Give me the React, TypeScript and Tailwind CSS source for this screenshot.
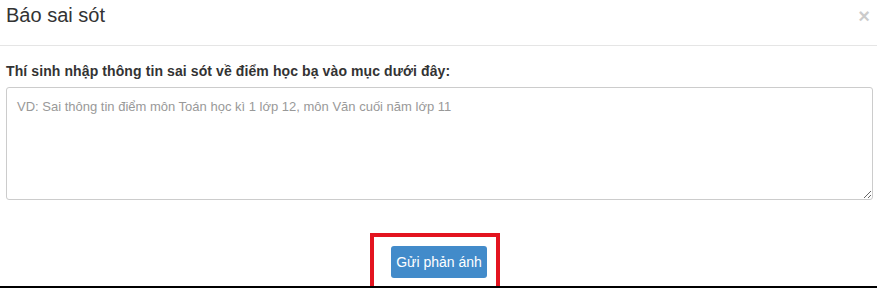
export default function App() {
  return (
    <div className="w-[877px] h-[288px] bg-white flex flex-col text-[#333] font-['Liberation_Sans',Arial,sans-serif] overflow-hidden">
      {/* header */}
      <div className="h-[46px] shrink-0 flex items-start justify-between pl-[6px] pr-[6px] pt-[4px] border-b border-[#e5e5e5]">
        <h4 className="text-[20px] leading-[22px]">Báo sai sót</h4>
        <button className="text-[20px] leading-[20px] font-bold text-black opacity-20 mr-[1px] mt-[2px]">×</button>
      </div>
      {/* body */}
      <div className="flex flex-col px-[6px] pt-[16px]">
        <label className="text-[14px] leading-[18px] font-bold tracking-[0.1px]">
          Thí sinh nhập thông tin sai sót về điểm học bạ vào mục dưới đây:
        </label>
        <textarea
          className="mt-[7px] h-[113px] w-[867px] border border-[#ccc] rounded-[3px] px-[10px] py-[10px] text-[13px] leading-[18px] placeholder:text-[#999] outline-none"
          placeholder="VD: Sai thông tin điểm môn Toán học kì 1 lớp 12, môn Văn cuối năm lớp 11"
        />
      </div>
      {/* footer */}
      <div className="flex-1 flex flex-col justify-end items-center">
        <div className="border-[4px] border-b-0 border-[#e3141f] pl-[17px] pr-[9px] pt-[9px] pb-[8px] ml-[-7px]">
          <button className="w-[96px] h-[32px] bg-[#428bca] rounded-[3px] text-white text-[14px] leading-[18px]">
            Gửi phản ánh
          </button>
        </div>
      </div>
      <div className="h-[2px] bg-black shrink-0" />
    </div>
  );
}
